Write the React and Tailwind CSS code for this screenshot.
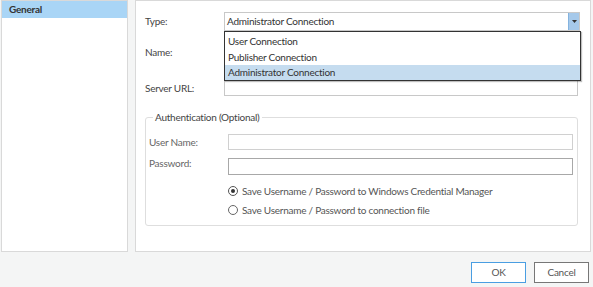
export default function App() {
  const font = { fontFamily: 'Lato, "Noto Sans", sans-serif' };
  return (
    <div
      className="w-[593px] h-[287px] bg-[#f4f5f5] flex flex-col text-[10px] tracking-[-0.25px] text-[#444]"
      style={font}
    >
      <div className="flex h-[252px]">
        <div className="ml-[1px] w-[127px] h-full border border-[#d9d9d9] bg-white">
          <div className="h-[17px] bg-[#a9d5f6] pl-[7px] font-bold text-[#333] leading-[17px]">
            General
          </div>
        </div>
        <div className="relative ml-[7px] w-[456px] h-full border border-[#d9d9d9] bg-white pl-[9px] pr-[10px] pt-[11px]">
          {/* Type */}
          <div className="flex items-center h-[19px]">
            <div className="w-[79px]">Type:</div>
            <div className="flex-1 h-[19px] border border-[#c8c8c8] flex items-center pl-[2px] text-[#333] relative">
              <span>Administrator Connection</span>
              <div className="absolute right-0 top-0 bottom-0 w-[11px] bg-[#a6c9ea] border-l border-[#84b3df] flex items-center justify-center">
                <svg width="5" height="3" viewBox="0 0 5 3">
                  <path d="M0 0 L5 0 L2.5 3 Z" fill="#333" />
                </svg>
              </div>
            </div>
          </div>
          {/* Name */}
          <div className="flex items-center h-[17px] mt-[13px]">
            <div className="w-[79px]">Name:</div>
            <div className="flex-1 h-[17px] border border-[#c8c8c8]" />
          </div>
          {/* Server URL */}
          <div className="flex items-center h-[16px] mt-[19px]">
            <div className="w-[79px]">Server URL:</div>
            <div className="flex-1 h-[16px] border border-[#c8c8c8] mr-[2px]" />
          </div>
          {/* Group */}
          <fieldset className="mt-[14px] mr-[2px] border border-[#dedede] rounded-[3px] pl-[3px] pr-[4px] pb-[9px] h-[116px]">
            <legend className="ml-[4px] px-[2px] text-[#444] text-[10px] leading-[14px]">
              Authentication (Optional)
            </legend>
            <div className="flex items-center h-[16px] mt-[10px] text-[#666]">
              <div className="w-[79px]">User Name:</div>
              <div className="flex-1 h-[16px] border border-[#d0d0d0]" />
            </div>
            <div className="flex items-center h-[17px] mt-[8px] text-[#666]">
              <div className="w-[79px] -mt-[6px]">Password:</div>
              <div className="flex-1 h-[17px] border border-[#a8a8a8]" />
            </div>
            <div className="ml-[79px] mt-[9px] flex flex-col gap-[5px] text-[#555]">
              <div className="flex items-center h-[14px]">
                <div className="w-[10px] h-[10px] rounded-full border border-[#555] flex items-center justify-center">
                  <div className="w-[4px] h-[4px] rounded-full bg-[#333]" />
                </div>
                <span className="ml-[4px]">Save Username / Password to Windows Credential Manager</span>
              </div>
              <div className="flex items-center h-[14px]">
                <div className="w-[10px] h-[10px] rounded-full border border-[#666]" />
                <span className="ml-[4px]">Save Username / Password to connection file</span>
              </div>
            </div>
          </fieldset>
          {/* Dropdown */}
          <div className="absolute left-[88px] top-[30px] w-[357px] h-[50px] bg-white border border-[#333] shadow-[1px_1px_1px_rgba(0,0,0,0.25)] text-[#333]">
            <div className="h-[16px] leading-[16px] pl-[3px] mt-[1px]">User Connection</div>
            <div className="h-[16px] leading-[16px] pl-[3px]">Publisher Connection</div>
            <div className="h-[15px] leading-[15px] pl-[3px] bg-[#c5dcef]">Administrator Connection</div>
          </div>
        </div>
      </div>
      <div className="flex justify-end gap-[8px] pr-[4px] mt-[10px]">
        <button className="w-[55px] h-[21px] border border-[#4a9ee2] bg-white text-[#555] text-[10px]">
          OK
        </button>
        <button className="w-[55px] h-[21px] border border-[#777] bg-white text-[#555] text-[10px]">
          Cancel
        </button>
      </div>
    </div>
  );
}
